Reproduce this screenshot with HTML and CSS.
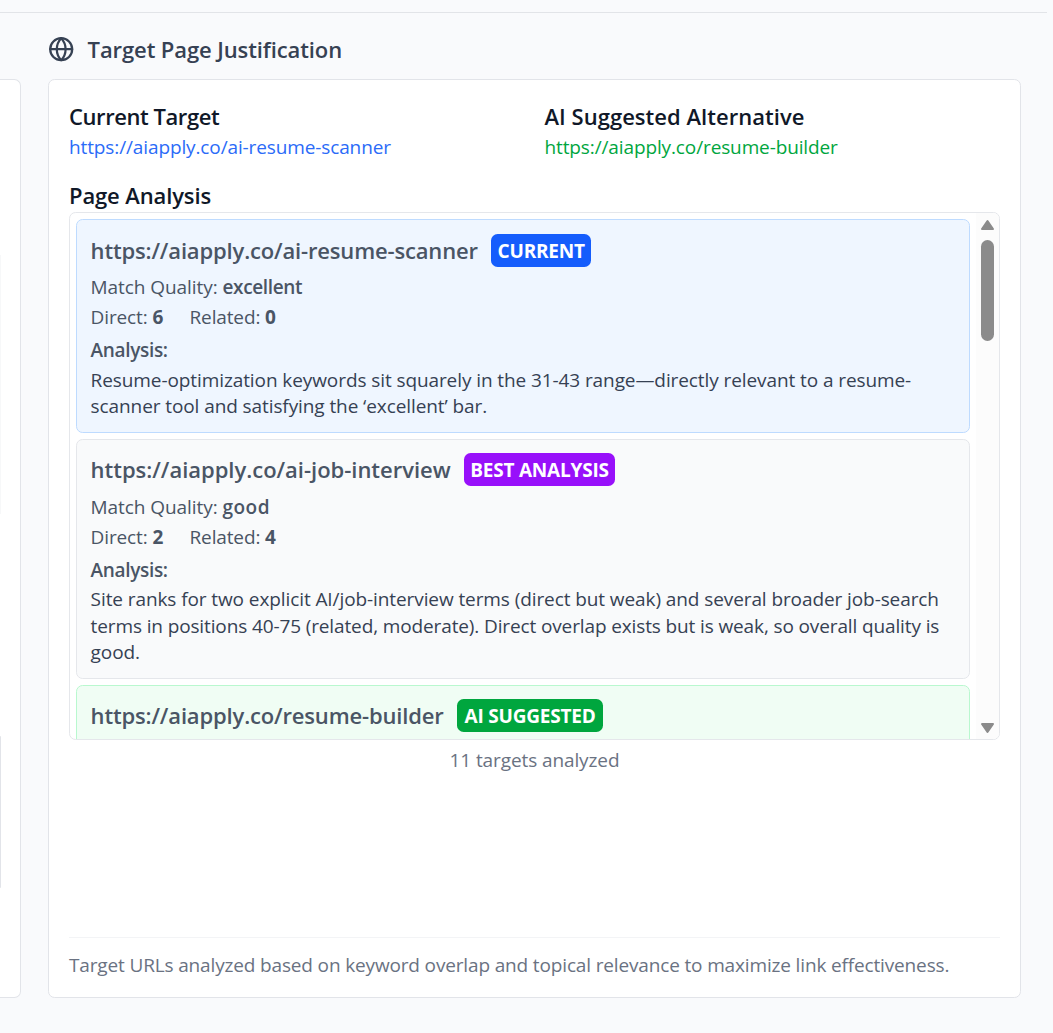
FILE: index.html
```html
<!DOCTYPE html>
<html lang="en">
<head>
<meta charset="utf-8">
<title>Target Page Justification</title>
<link rel="stylesheet" href="styles.css">
</head>
<body>
<div class="page">
  <div class="topline"></div>
  <div class="columns">
    <aside class="side-card">
      <div class="side-block side-block-light"></div>
      <div class="side-block side-block-dark"></div>
    </aside>
    <main class="main">
      <h2 class="title">
        <svg class="globe" viewBox="0 0 24 24" fill="none" stroke="currentColor" stroke-width="2" stroke-linecap="round" stroke-linejoin="round"><circle cx="12" cy="12" r="10"/><path d="M12 2a14.5 14.5 0 0 0 0 20 14.5 14.5 0 0 0 0-20"/><path d="M2 12h20"/></svg>
        <span>Target Page Justification</span>
      </h2>
      <section class="card">
        <div class="targets">
          <div>
            <h3 class="label t-current">Current Target</h3>
            <a class="link blue">https://aiapply.co/ai-resume-scanner</a>
          </div>
          <div>
            <h3 class="label t-alt">AI Suggested Alternative</h3>
            <a class="link green">https://aiapply.co/resume-builder</a>
          </div>
        </div>
        <h3 class="label t-analysis">Page Analysis</h3>
        <div class="scrollbox">
          <div class="list">
            <article class="item item-current">
              <div class="item-head"><span class="url">https://aiapply.co/ai-resume-scanner</span><span class="badge badge-current">CURRENT</span></div>
              <div class="quality">Match Quality: <b class="excellent">excellent</b></div>
              <div class="counts"><span>Direct: <b>6</b></span><span>Related: <b>0</b></span></div>
              <div class="analysis">Analysis:</div>
              <p class="copy">Resume-optimization keywords sit squarely in the 31-43 range—directly relevant to a resume-<br>scanner tool and satisfying the ‘excellent’ bar.</p>
            </article>
            <article class="item">
              <div class="item-head"><span class="url url-job">https://aiapply.co/ai-job-interview</span><span class="badge badge-best">BEST ANALYSIS</span></div>
              <div class="quality">Match Quality: <b class="good">good</b></div>
              <div class="counts"><span>Direct: <b>2</b></span><span>Related: <b>4</b></span></div>
              <div class="analysis">Analysis:</div>
              <p class="copy">Site ranks for two explicit AI/job-interview terms (direct but weak) and several broader job-search<br><span class="tight">terms in positions 40-75 (related, moderate). Direct overlap exists but is weak, so overall quality is</span><br>good.</p>
            </article>
            <article class="item item-suggested">
              <div class="item-head"><span class="url">https://aiapply.co/resume-builder</span><span class="badge badge-suggested">AI SUGGESTED</span></div>
            </article>
          </div>
          <div class="scrollbar">
            <svg class="arrow" viewBox="0 0 15 12"><path d="M7.5 2 13 10H2Z"/></svg>
            <div class="thumb"></div>
            <svg class="arrow arrow-down" viewBox="0 0 15 12"><path d="M7.5 10 2 2H13Z"/></svg>
          </div>
        </div>
        <div class="total">11 targets analyzed</div>
        <footer class="foot">Target URLs analyzed based on keyword overlap and topical relevance to maximize link effectiveness.</footer>
      </section>
    </main>
  </div>
</div>
</body>
</html>
```
FILE: styles.css
```css
* { box-sizing: border-box; }
body { margin: 0; background: #f9fafb; font-family: "Open Sans", "Noto Sans", sans-serif; font-size: 19px; line-height: 26.4px; color: #4a5565; overflow: hidden; }
h2, h3, p { margin: 0; }
b { font-weight: 600; }
.page { height: 1033px; padding-top: 12px; overflow: hidden; background: #f9fafc; }
.topline { width: 1047px; height: 1px; background: #e2e4e8; }
.columns { display: flex; gap: 27px; height: 1020px; }
.side-card { width: 21px; height: 919px; margin-top: 66px; padding-top: 175px; background: #fff; border: 1px solid #e2e4e9; border-left: 0; border-radius: 0 6.6px 6.6px 0; }
.side-block { width: 1px; }
.side-block-light { height: 259px; background: #f7f8f9; }
.side-block-dark { height: 152px; margin-top: 222px; background: #e2e4e9; border-radius: 0 1px 1px 0; }
.main { width: 973px; }
.title { display: flex; align-items: center; gap: 13.2px; height: 66px; padding-top: 6px; font-size: 22px; font-weight: 600; color: #364153; white-space: nowrap; letter-spacing: -0.1px; }
.globe { width: 26.4px; height: 26.4px; flex: none; }
.card { display: flex; flex-direction: column; height: 919px; padding: 20px; background: #fff; border: 1px solid #e2e4e9; border-radius: 6.6px; white-space: nowrap; }
.targets { display: grid; grid-template-columns: 1fr 1fr; gap: 20px; height: 79px; }
.label { height: 33px; font-size: 22px; line-height: 33px; font-weight: 600; color: #101828; }
.t-current { letter-spacing: -0.43px; }
.t-alt { letter-spacing: 0.03px; }
.t-analysis { letter-spacing: -0.12px; }
.link { display: block; padding-top: 1px; letter-spacing: -0.12px; }
.blue { color: #2b6bf8; }
.green { color: #00a63e; }
.scrollbox { display: flex; height: 528px; border: 1px solid #e5e7eb; border-radius: 6.6px; overflow: hidden; flex: none; }
.list { width: 906px; padding: 6px; display: flex; flex-direction: column; gap: 5.6px; }
.item { flex: none; padding: 13.6px 13.6px 12.4px; background: #f9fafb; border: 1px solid #e5e7eb; border-radius: 6.6px; }
.item-current { background: #eff6ff; border-color: #bedbff; }
.item-suggested { background: #f0fdf4; border-color: #b9f8cf; }
.item-head { display: flex; gap: 13.4px; align-items: center; height: 33px; margin-bottom: 7.5px; }
.url { font-size: 22px; font-weight: 600; letter-spacing: -0.16px; }
.url-job { letter-spacing: -0.02px; }
.badge { height: 33px; border-radius: 6.6px; color: #fff; font-weight: 700; line-height: 34.6px; text-align: center; letter-spacing: -0.2px; }
.badge-current { width: 100px; background: #155dfc; }
.badge-best { width: 151px; background: #9810fa; }
.badge-suggested { width: 146px; background: #00a63e; }
.quality { margin-bottom: 3.9px; letter-spacing: -0.07px; }
.excellent { letter-spacing: -0.35px; }
.good { letter-spacing: 0.5px; }
.counts { display: flex; gap: 26.4px; margin-bottom: 6.5px; letter-spacing: -0.13px; }
.counts b { font-weight: 700; }
.analysis { margin-bottom: 3.1px; font-weight: 600; letter-spacing: -0.33px; }
.copy { color: #364153; letter-spacing: -0.09px; }
.tight { letter-spacing: -0.125px; }
.scrollbar { display: flex; flex-direction: column; align-items: center; width: 23px; padding: 6px 0 5px; background: #fcfcfc; }
.arrow { width: 15px; height: 12px; fill: #8b8b8b; stroke: #8b8b8b; stroke-width: 2; stroke-linejoin: round; }
.thumb { width: 13px; height: 101px; margin-top: 9px; border-radius: 7px; background: #8b8b8b; }
.arrow-down { margin-top: auto; }
.total { margin-top: 7px; text-align: center; color: #6a7282; letter-spacing: -0.1px; }
.foot { margin-top: auto; height: 40px; padding-top: 14px; border-top: 1px solid #f3f4f6; color: #6a7282; letter-spacing: -0.15px; }
```
